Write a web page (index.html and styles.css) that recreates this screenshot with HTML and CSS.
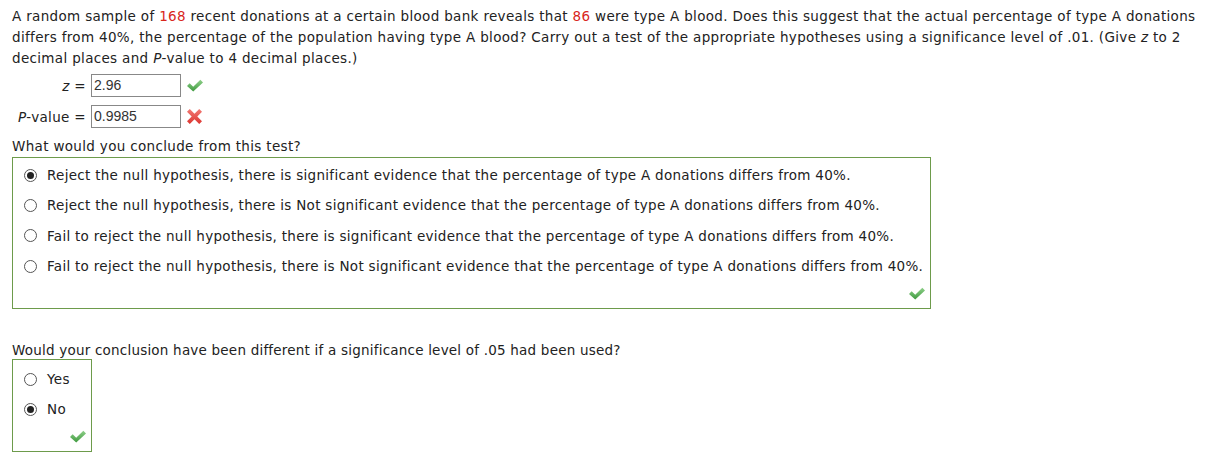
FILE: index.html
```html
<!DOCTYPE html>
<html>
<head>
<meta charset="utf-8">
<link rel="stylesheet" href="styles.css">
</head>
<body>
<div class="page">
  <p class="question">A random sample of <span class="num">168</span> recent donations at a certain blood bank reveals that <span class="num">86</span> were type A blood. Does this suggest that the actual percentage of type A donations<br>differs from 40%, the percentage of the population having type A blood? Carry out a test of the appropriate hypotheses using a significance level of .01. (Give <i>z</i> to 2<br>decimal places and <i>P</i>-value to 4 decimal places.)</p>

  <div class="answers">
    <div class="arow">
      <span class="alabel"><i>z</i> =</span>
      <span class="abox">2.96</span>
      <svg class="icon" width="16" height="13" viewBox="0 0 18 14"><defs><linearGradient id="g1" x1="0" y1="0" x2="0" y2="1"><stop offset="0" stop-color="#8fd08a"/><stop offset="1" stop-color="#3f9a3f"/></linearGradient></defs><polygon points="0,7.5 3,4.5 7,8.3 15,0.5 18,3.5 7,13.8" fill="url(#g1)"/></svg>
    </div>
    <div class="arow">
      <span class="alabel"><i>P</i>-value =</span>
      <span class="abox">0.9985</span>
      <svg class="icon x" width="15" height="15" viewBox="0 0 14 14"><defs><linearGradient id="g2" x1="0" y1="0" x2="0" y2="1"><stop offset="0" stop-color="#f27a74"/><stop offset="1" stop-color="#dc3530"/></linearGradient></defs><polygon points="0,2.6 2.6,0 7,4.4 11.4,0 14,2.6 9.6,7 14,11.4 11.4,14 7,9.6 2.6,14 0,11.4 4.4,7" fill="url(#g2)"/></svg>
    </div>
  </div>

  <p class="prompt">What would you conclude from this test?</p>
  <div class="choices wide">
    <label class="opt"><span class="radio on"></span>Reject the null hypothesis, there is significant evidence that the percentage of type A donations differs from 40%.</label>
    <label class="opt"><span class="radio"></span>Reject the null hypothesis, there is Not significant evidence that the percentage of type A donations differs from 40%.</label>
    <label class="opt"><span class="radio"></span>Fail to reject the null hypothesis, there is significant evidence that the percentage of type A donations differs from 40%.</label>
    <label class="opt"><span class="radio"></span>Fail to reject the null hypothesis, there is Not significant evidence that the percentage of type A donations differs from 40%.</label>
    <div class="mark"><svg width="16" height="13" viewBox="0 0 18 14"><defs><linearGradient id="g3" x1="0" y1="0" x2="0" y2="1"><stop offset="0" stop-color="#8fd08a"/><stop offset="1" stop-color="#3f9a3f"/></linearGradient></defs><polygon points="0,7.5 3,4.5 7,8.3 15,0.5 18,3.5 7,13.8" fill="url(#g3)"/></svg></div>
  </div>

  <p class="prompt second">Would your conclusion have been different if a significance level of .05 had been used?</p>
  <div class="choices narrow">
    <label class="opt"><span class="radio"></span>Yes</label>
    <label class="opt"><span class="radio on"></span>No</label>
    <div class="mark"><svg width="16" height="13" viewBox="0 0 18 14"><defs><linearGradient id="g4" x1="0" y1="0" x2="0" y2="1"><stop offset="0" stop-color="#8fd08a"/><stop offset="1" stop-color="#3f9a3f"/></linearGradient></defs><polygon points="0,7.5 3,4.5 7,8.3 15,0.5 18,3.5 7,13.8" fill="url(#g4)"/></svg></div>
  </div>
</div>
</body>
</html>
```

FILE: styles.css
```css
html, body {
  margin: 0;
  padding: 0;
  background: #ffffff;
}
.page {
  padding: 6px 12px 0 12px;
  font-family: "DejaVu Sans", Verdana, sans-serif;
  font-size: 13.5px;
  letter-spacing: 0.33px;
  color: #222222;
}
.question {
  margin: 0;
  line-height: 21px;
  white-space: nowrap;
}
.num {
  color: #d9261c;
}
.answers {
  display: flex;
  flex-direction: column;
  gap: 8px;
  margin-top: 5px;
}
.arow {
  display: flex;
  align-items: center;
  height: 23px;
}
.alabel {
  width: 74px;
  text-align: right;
  margin-right: 5px;
}
.abox {
  box-sizing: border-box;
  width: 90px;
  height: 23px;
  border: 1px solid #888888;
  font-family: "Liberation Sans", Arial, sans-serif;
  font-size: 14px;
  letter-spacing: 0;
  color: #333333;
  padding: 1px 2px;
  line-height: 19px;
}
.icon {
  margin-left: 6px;
}
.icon.x {
  margin-left: 6px;
}
.prompt {
  margin: 9px 0 0 0;
  line-height: 18px;
}
.prompt.second {
  margin-top: 32px;
  letter-spacing: 0.21px;
}
.choices {
  border: 1px solid #6d9b4b;
  margin-top: 2px;
  box-sizing: border-box;
  display: flex;
  flex-direction: column;
  padding: 2px 0 0 0;
}
.choices.wide {
  width: 919px;
  height: 152px;
}
.choices.wide .opt {
  letter-spacing: 0.29px;
}
.choices.narrow {
  width: 80px;
  height: 93px;
  margin-top: 0;
  padding-top: 4px;
}
.opt {
  display: flex;
  align-items: center;
  height: 30.3px;
  padding-left: 11px;
  white-space: nowrap;
}
.radio {
  box-sizing: border-box;
  width: 13px;
  height: 13px;
  border: 1px solid #555555;
  border-radius: 50%;
  margin-right: 10px;
  background: #ffffff;
  display: flex;
  align-items: center;
  justify-content: center;
}
.radio.on::after {
  content: "";
  width: 7px;
  height: 7px;
  border-radius: 50%;
  background: #222222;
}
.mark {
  margin-top: auto;
  align-self: flex-end;
  margin-right: 5px;
  margin-bottom: 8px;
  height: 13px;
}
```
